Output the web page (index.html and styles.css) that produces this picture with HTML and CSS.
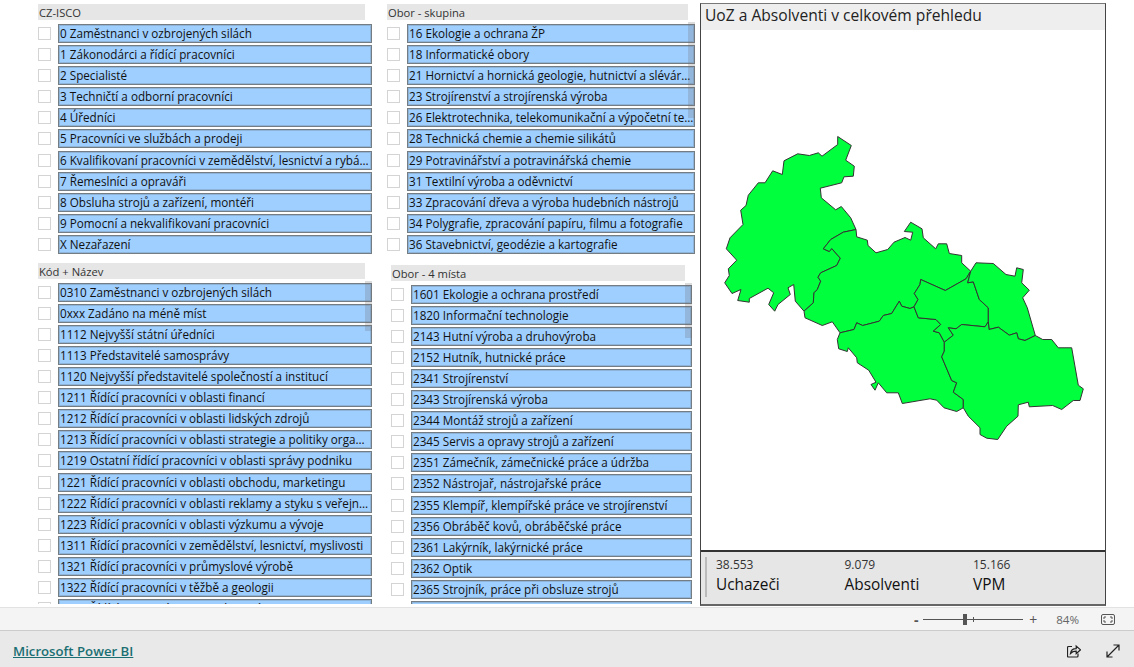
FILE: index.html
```html
<!DOCTYPE html>
<html lang="cs">
<head>
<meta charset="utf-8">
<title>UoZ a Absolventi</title>
<link rel="stylesheet" href="styles.css">
</head>
<body>
<main class="board">
  <div class="col col-a">
    <section class="slicer">
      <h2 class="slicer-title">CZ-ISCO</h2>
      <ul class="list">
        <li class="item"><span class="check"></span><span class="chip">0 Zaměstnanci v ozbrojených silách</span></li>
        <li class="item"><span class="check"></span><span class="chip">1 Zákonodárci a řídící pracovníci</span></li>
        <li class="item"><span class="check"></span><span class="chip">2 Specialisté</span></li>
        <li class="item"><span class="check"></span><span class="chip">3 Techničtí a odborní pracovníci</span></li>
        <li class="item"><span class="check"></span><span class="chip">4 Úředníci</span></li>
        <li class="item"><span class="check"></span><span class="chip">5 Pracovníci ve službách a prodeji</span></li>
        <li class="item"><span class="check"></span><span class="chip">6 Kvalifikovaní pracovníci v zemědělství, lesnictví a rybářství</span></li>
        <li class="item"><span class="check"></span><span class="chip">7 Řemeslníci a opraváři</span></li>
        <li class="item"><span class="check"></span><span class="chip">8 Obsluha strojů a zařízení, montéři</span></li>
        <li class="item"><span class="check"></span><span class="chip">9 Pomocní a nekvalifikovaní pracovníci</span></li>
        <li class="item"><span class="check"></span><span class="chip">X Nezařazení</span></li>
      </ul>
    </section>
    <section class="slicer slicer-low-a">
      <h2 class="slicer-title">Kód + Název</h2>
      <ul class="list list-clip">
        <li class="item"><span class="check"></span><span class="chip">0310 Zaměstnanci v ozbrojených silách</span></li>
        <li class="item"><span class="check"></span><span class="chip">0xxx Zadáno na méně míst</span></li>
        <li class="item"><span class="check"></span><span class="chip">1112 Nejvyšší státní úředníci</span></li>
        <li class="item"><span class="check"></span><span class="chip">1113 Představitelé samosprávy</span></li>
        <li class="item"><span class="check"></span><span class="chip">1120 Nejvyšší představitelé společností a institucí</span></li>
        <li class="item"><span class="check"></span><span class="chip">1211 Řídící pracovníci v oblasti financí</span></li>
        <li class="item"><span class="check"></span><span class="chip">1212 Řídící pracovníci v oblasti lidských zdrojů</span></li>
        <li class="item"><span class="check"></span><span class="chip">1213 Řídící pracovníci v oblasti strategie a politiky organizace</span></li>
        <li class="item"><span class="check"></span><span class="chip">1219 Ostatní řídící pracovníci v oblasti správy podniku</span></li>
        <li class="item"><span class="check"></span><span class="chip">1221 Řídící pracovníci v oblasti obchodu, marketingu</span></li>
        <li class="item"><span class="check"></span><span class="chip">1222 Řídící pracovníci v oblasti reklamy a styku s veřejností</span></li>
        <li class="item"><span class="check"></span><span class="chip">1223 Řídící pracovníci v oblasti výzkumu a vývoje</span></li>
        <li class="item"><span class="check"></span><span class="chip">1311 Řídící pracovníci v zemědělství, lesnictví, myslivosti</span></li>
        <li class="item"><span class="check"></span><span class="chip">1321 Řídící pracovníci v průmyslové výrobě</span></li>
        <li class="item"><span class="check"></span><span class="chip">1322 Řídící pracovníci v těžbě a geologii</span></li>
        <li class="item"><span class="check"></span><span class="chip">1323 Řídící pracovníci ve stavebnictví</span></li>
      </ul>
      <div class="thumb thumb-a"></div>
    </section>
  </div>

  <div class="col col-b">
    <section class="slicer">
      <h2 class="slicer-title">Obor - skupina</h2>
      <ul class="list">
        <li class="item"><span class="check"></span><span class="chip">16 Ekologie a ochrana ŽP</span></li>
        <li class="item"><span class="check"></span><span class="chip">18 Informatické obory</span></li>
        <li class="item"><span class="check"></span><span class="chip">21 Hornictví a hornická geologie, hutnictví a slévárenství</span></li>
        <li class="item"><span class="check"></span><span class="chip">23 Strojírenství a strojírenská výroba</span></li>
        <li class="item"><span class="check"></span><span class="chip">26 Elektrotechnika, telekomunikační a výpočetní technika</span></li>
        <li class="item"><span class="check"></span><span class="chip">28 Technická chemie a chemie silikátů</span></li>
        <li class="item"><span class="check"></span><span class="chip">29 Potravinářství a potravinářská chemie</span></li>
        <li class="item"><span class="check"></span><span class="chip">31 Textilní výroba a oděvnictví</span></li>
        <li class="item"><span class="check"></span><span class="chip">33 Zpracování dřeva a výroba hudebních nástrojů</span></li>
        <li class="item"><span class="check"></span><span class="chip">34 Polygrafie, zpracování papíru, filmu a fotografie</span></li>
        <li class="item"><span class="check"></span><span class="chip">36 Stavebnictví, geodézie a kartografie</span></li>
      </ul>
      <div class="thumb thumb-b"></div>
    </section>
    <section class="slicer slicer-low-b">
      <h2 class="slicer-title">Obor - 4 místa</h2>
      <ul class="list list-clip-b">
        <li class="item"><span class="check"></span><span class="chip">1601 Ekologie a ochrana prostředí</span></li>
        <li class="item"><span class="check"></span><span class="chip">1820 Informační technologie</span></li>
        <li class="item"><span class="check"></span><span class="chip">2143 Hutní výroba a druhovýroba</span></li>
        <li class="item"><span class="check"></span><span class="chip">2152 Hutník, hutnické práce</span></li>
        <li class="item"><span class="check"></span><span class="chip">2341 Strojírenství</span></li>
        <li class="item"><span class="check"></span><span class="chip">2343 Strojírenská výroba</span></li>
        <li class="item"><span class="check"></span><span class="chip">2344 Montáž strojů a zařízení</span></li>
        <li class="item"><span class="check"></span><span class="chip">2345 Servis a opravy strojů a zařízení</span></li>
        <li class="item"><span class="check"></span><span class="chip">2351 Zámečník, zámečnické práce a údržba</span></li>
        <li class="item"><span class="check"></span><span class="chip">2352 Nástrojař, nástrojařské práce</span></li>
        <li class="item"><span class="check"></span><span class="chip">2355 Klempíř, klempířské práce ve strojírenství</span></li>
        <li class="item"><span class="check"></span><span class="chip">2356 Obráběč kovů, obráběčské práce</span></li>
        <li class="item"><span class="check"></span><span class="chip">2361 Lakýrník, lakýrnické práce</span></li>
        <li class="item"><span class="check"></span><span class="chip">2362 Optik</span></li>
        <li class="item"><span class="check"></span><span class="chip">2365 Strojník, práce při obsluze strojů</span></li>
        <li class="item"><span class="check"></span><span class="chip"></span></li>
      </ul>
      <div class="thumb thumb-c"></div>
    </section>
  </div>

  <section class="panel">
    <h1 class="panel-title">UoZ a Absolventi v celkovém přehledu</h1>
    <svg class="map" viewBox="701 31 404 519" aria-label="Mapa regionů">
      <g class="regions">
        <polygon points="837.7,137 851.3,146 845.7,160.7 854.3,166.7 853.3,176.7 844,177.3 841.7,183.3 820.3,188.7 821.3,198.3 835.7,210.3 841.3,207 850.7,218.3 856,230 843.3,232.7 830.7,240 823.3,249.3 829.3,252 831.7,249 840.3,258.7 836.7,266 820.7,273.3 818,277.7 820.7,281.7 817.3,290 814,293.3 813.3,303.3 804,311.7 795.3,301.7 793.7,285 788,288.3 790.3,295 778,305 774.7,311.7 768.7,305 773.7,293.3 768,288.7 749.3,299 749.3,302.7 737.7,301 741,290 732,294 724.7,283.3 729.3,276 728.3,269.3 736.7,260.7 726.3,249.3 730,238.3 743,225 740.7,210.7 746,206 748.3,195.7 758.3,183.3 765,183.3 772.7,171.3 782.3,175 784,161.3 797.7,154.3 809.3,156 818.3,153.3 822,156.7 837.7,145"/>
        <polygon points="856,230 856.7,237.3 867.3,240.7 868,246 876,253.3 887.7,250 894,242.7 905,238 910.7,240.7 912.7,232.7 904.3,232 910.7,222.7 922,229.3 923.3,238.3 935.7,249.3 938.3,244.3 946.7,244.3 949.3,254 961.7,256 961.7,263.3 970.7,271.7 966,279.3 945.3,291 920.7,280 920,285 914.3,294 918,300 914,307.3 910,309 901.7,306.7 899.3,301.7 891.7,314 883.3,316 879.3,321.7 862.7,326 856.7,323.3 854,330 840,333.3 832.3,322.3 822.3,326 805,318.3 804,311.7 813.3,303.3 814,293.3 817.3,290 820.7,281.7 818,277.7 820.7,273.3 836.7,266 840.3,258.7 831.7,249 829.3,252 823.3,249.3 830.7,240 843.3,232.7"/>
        <polygon points="840,333.3 837.3,340 838.7,349.3 847.3,352 848.3,348.3 856.7,358.3 857.3,363.3 868.7,370.7 876,382.7 871,385 875,390.7 878.3,383.3 886.7,393.3 898.3,393.3 902.3,404 930,399.3 936.7,400.7 944,408.3 956.7,412 963.3,408.3 963.3,400 953.3,392.7 956.7,383.3 951.7,381 941.7,357.3 944.3,351.7 944.3,342.7 939.3,333.3 933.3,331.7 940.7,325 936,320 918.3,318.3 914,307.3 910,309 901.7,306.7 899.3,301.7 891.7,314 883.3,316 879.3,321.7 862.7,326 856.7,323.3 854,330"/>
        <polygon points="920.7,280 945.3,291 966,279.3 970.7,271.7 967.7,283.3 973.3,282.3 979.3,300 988.3,308.3 988.3,322.3 985,327.3 961.7,325 956,329.3 948.3,328.3 953.3,335.7 944.3,342.7 939.3,333.3 933.3,331.7 940.7,325 936,320 918.3,318.3 914,307.3 918,300 914.3,294 920,285"/>
        <polygon points="970.7,271.7 976,263.3 993.3,264 1006,275 1015,276.7 1016.7,268.3 1023.3,270 1021.7,283.3 1029.3,290.7 1022.7,298.3 1027.3,308.3 1035.3,336 1025,341 1018.3,339.3 1016.7,333.3 1009.3,335.7 998.3,327.7 989,330 988.3,322.3 988.3,308.3 979.3,300 973.3,282.3 967.7,283.3"/>
        <polygon points="948.3,328.3 956,329.3 961.7,325 985,327.3 988.3,322.3 989,330 998.3,327.7 1009.3,335.7 1016.7,333.3 1018.3,339.3 1025,341 1035.3,336 1042.7,340 1051.7,340 1058.3,348.3 1071.7,348.3 1078.3,385.7 1083.3,389.3 1080,401 1073.3,401 1061.7,410 1052.7,406 1029.3,407.3 1028.3,402.7 1018.3,405.3 1018,416.7 1006.7,426.7 997.7,440 986.7,438.7 980,435 980,428.3 968.3,416.7 963.3,408.3 963.3,400 953.3,392.7 956.7,383.3 951.7,381 941.7,357.3 944.3,351.7 944.3,342.7 953.3,335.7"/>
      </g>
    </svg>
    <div class="stats">
      <div class="stats-inner">
        <div class="stat"><div class="stat-value">38.553</div><div class="stat-label">Uchazeči</div></div>
        <div class="stat"><div class="stat-value">9.079</div><div class="stat-label">Absolventi</div></div>
        <div class="stat"><div class="stat-value">15.166</div><div class="stat-label">VPM</div></div>
      </div>
    </div>
  </section>
</main>

<div class="zoombar">
  <span class="zoom-sign">-</span>
  <div class="slider"><span class="slider-tick"></span><span class="slider-thumb"></span></div>
  <span class="zoom-sign zoom-plus">+</span>
  <span class="zoom-value">84%</span>
  <svg class="fit-icon" width="14" height="11" viewBox="0 0 14 11">
    <rect x="0.5" y="0.5" width="13" height="10" rx="1.5" class="icon-grey"/>
    <path d="M3 5V3h2M9 3h2v2M11 6v2H9M5 8H3V6" class="icon-grey"/>
  </svg>
</div>

<footer class="footer">
  <a class="brand" href="#">Microsoft Power BI</a>
  <div class="footer-icons">
    <svg width="14" height="14" viewBox="0 0 14 14">
      <path d="M5 2.500H1.500a1 1 0 0 0-1 1v8.500a1 1 0 0 0 1 1h8.500a1 1 0 0 0 1-1V9.500" class="icon-dark"/>
      <path d="M3.500 9.500c.4-2.900 2.700-4.800 5.700-4.800V2l4.300 3.800-4.300 3.800V7.200c-2.300 0-4.200.7-5.700 2.300z" class="icon-dark"/>
    </svg>
    <svg width="14" height="14" viewBox="0 0 14 14">
      <path d="M1 13 13 1M7.500 1H13v5.500M1 7.500V13h5.500" class="icon-dark"/>
    </svg>
  </div>
</footer>
</body>
</html>
```

FILE: styles.css
```css
* { box-sizing: border-box; }
html, body { margin: 0; padding: 0; }
body {
  width: 1134px;
  height: 667px;
  overflow: hidden;
  background: #fff;
  font-family: "Open Sans", "Noto Sans", sans-serif;
  color: #222;
}

.board {
  display: flex;
  height: 607px;
  padding-left: 38px;
  overflow: hidden;
}
.col { padding-top: 4px; }
.col-a { width: 334px; margin-right: 15px; }
.col-b { width: 308px; margin-right: 5px; }

.slicer { position: relative; }
.slicer-low-a { margin-top: 9.3px; }
.slicer-low-b { margin: 11.1px 3px 0 4px; }
.slicer-title {
  margin: 0 7px 4px 0;
  height: 16px;
  padding-left: 1px;
  background: #e6e6e6;
  font-size: 11.2px;
  font-weight: 400;
  line-height: 17px;
  color: #333;
}
.slicer-low-a .slicer-title { margin-bottom: 3.5px; }
.slicer-low-b .slicer-title { margin-bottom: 3.6px; }

.list {
  list-style: none;
  margin: 0;
  padding: 0;
  display: flex;
  flex-direction: column;
  gap: 2.1px;
}
.list-clip { height: 321.2px; overflow: hidden; }
.list-clip-b { height: 319.1px; overflow: hidden; }

.item {
  display: flex;
  flex: none;
  align-items: center;
  gap: 7px;
  height: 19px;
}
.check {
  flex: none;
  width: 13px;
  height: 13px;
  background: #fff;
  border: 1px solid #d4d4d4;
}
.chip {
  flex: 1;
  min-width: 0;
  height: 19px;
  padding-left: 1px;
  background: #9fcfff;
  border: 1px solid #747c84;
  box-shadow: inset 0 0 0 1px rgba(116, 130, 145, 0.35);
  font-size: 11.7px;
  line-height: 17px;
  color: #111;
  white-space: nowrap;
  overflow: hidden;
  text-overflow: ellipsis;
}

.thumb {
  position: absolute;
  right: 0;
  width: 7px;
  background: rgba(110, 110, 110, 0.24);
}
.thumb-a { top: 18px; height: 50px; }
.thumb-b { top: 18px; height: 96px; }
.thumb-c { top: 18px; height: 55px; }

.panel {
  display: flex;
  flex-direction: column;
  width: 406px;
  height: 603px;
  margin-top: 3px;
  border: 1px solid #444;
  border-top-color: #777;
  border-bottom: 2px solid #666;
}
.panel-title {
  flex: none;
  margin: 0;
  height: 26px;
  padding-left: 4px;
  background: #eee;
  font-size: 15.6px;
  font-weight: 400;
  line-height: 23px;
  color: #222;
}
.map { display: block; flex: 1; min-height: 0; width: 404px; }
.regions polygon {
  fill: #00ff3c;
  stroke: #333;
  stroke-width: 1;
  stroke-linejoin: round;
}

.stats {
  flex: none;
  height: 54px;
  padding: 5px 0 0 4px;
  background: #e6e6e6;
  border-top: 2px solid #333;
}
.stats-inner {
  display: flex;
  height: 40px;
  padding-left: 9px;
  border-left: 2px solid #bbb;
}
.stat { width: 128.5px; }
.stat-value { font-size: 12px; line-height: 16px; color: #333; }
.stat-label { font-size: 15.4px; line-height: 23px; color: #111; }

.zoombar {
  display: flex;
  align-items: center;
  justify-content: flex-end;
  height: 24px;
  padding-right: 19px;
  background: #f4f4f4;
  border-top: 1px solid #e2e2e2;
  border-bottom: 1px solid #ccc;
  color: #555;
}
.zoom-sign { font-size: 14px; font-weight: 700; width: 8px; text-align: center; }
.zoom-plus { font-weight: 400; margin-left: 6px; width: 8px; }
.slider {
  position: relative;
  width: 100px;
  height: 1px;
  margin-left: 3px;
  background: #555;
}
.slider-tick {
  position: absolute;
  left: 50px;
  top: -2px;
  width: 1px;
  height: 5px;
  background: #555;
}
.slider-thumb {
  position: absolute;
  left: 40px;
  top: -5px;
  width: 4px;
  height: 11px;
  background: #555;
}
.zoom-value { margin-left: 19px; font-size: 11.6px; color: #666; }
.fit-icon { margin-left: 22px; }
.icon-grey { fill: none; stroke: #555; stroke-width: 1; }

.footer {
  display: flex;
  align-items: center;
  justify-content: space-between;
  height: 36px;
  padding: 3px 14px 0 13px;
  background: #e9e9e9;
}
.brand {
  font-size: 13.2px;
  font-weight: 600;
  color: #1b6f73;
  text-decoration: underline;
}
.footer-icons { display: flex; align-items: center; gap: 25px; }
.icon-dark { fill: none; stroke: #222; stroke-width: 1.2; }
```
